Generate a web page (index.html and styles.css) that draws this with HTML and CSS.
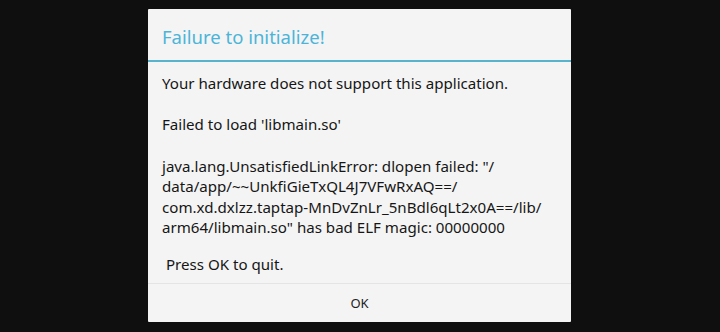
FILE: index.html
```html
<!DOCTYPE html>
<html>
<head>
<meta charset="utf-8">
<link rel="stylesheet" href="styles.css">
</head>
<body>
<div class="dialog">
  <div class="title">Failure to initialize!</div>
  <div class="message">
    <p class="line">Your hardware does not support this application.</p>
    <p class="line gap">Failed to load 'libmain.so'</p>
    <p class="line gap-wide">java.lang.UnsatisfiedLinkError: dlopen failed: "/</p>
    <p class="line">data/app/~~UnkfiGieTxQL4J7VFwRxAQ==/</p>
    <p class="line">com.xd.dxlzz.taptap-MnDvZnLr_5nBdl6qLt2x0A==/lib/</p>
    <p class="line">arm64/libmain.so" has bad ELF magic: 00000000</p>
    <p class="line quit">&nbsp;Press OK to quit.</p>
  </div>
  <div class="footer">
    <button class="ok">OK</button>
  </div>
</div>
</body>
</html>
```

FILE: styles.css
```css
html, body {
  margin: 0;
  padding: 0;
}
body {
  width: 720px;
  height: 332px;
  background: #0f0f0f;
  display: flex;
  justify-content: center;
  align-items: flex-start;
  font-family: "Noto Sans", "Open Sans", sans-serif;
  overflow: hidden;
}
.dialog {
  margin-top: 9px;
  margin-left: -1px;
  width: 423px;
  height: 313px;
  background: #f4f4f4;
  display: flex;
  flex-direction: column;
  border-radius: 1px;
}
.title {
  height: 53px;
  box-sizing: border-box;
  padding: 15px 14px 0 14px;
  font-size: 18.5px;
  line-height: 26px;
  color: #4cb4d8;
  border-bottom: 2px solid #58b3cc;
}
.message {
  flex: 1;
  padding: 11px 14px 0 14px;
  color: #161616;
  font-size: 15.1px;
  line-height: 20.5px;
}
.line {
  margin: 0;
  white-space: nowrap;
}
.gap {
  margin-top: 20px;
}
.gap-wide {
  margin-top: 21.5px;
}
.quit {
  margin-top: 16px;
}
.footer {
  height: 38px;
  border-top: 1px solid #e4e4e4;
  display: flex;
  align-items: center;
  justify-content: center;
}
.ok {
  background: none;
  border: none;
  padding: 0;
  font-family: inherit;
  font-size: 13px;
  color: #222;
}
```
